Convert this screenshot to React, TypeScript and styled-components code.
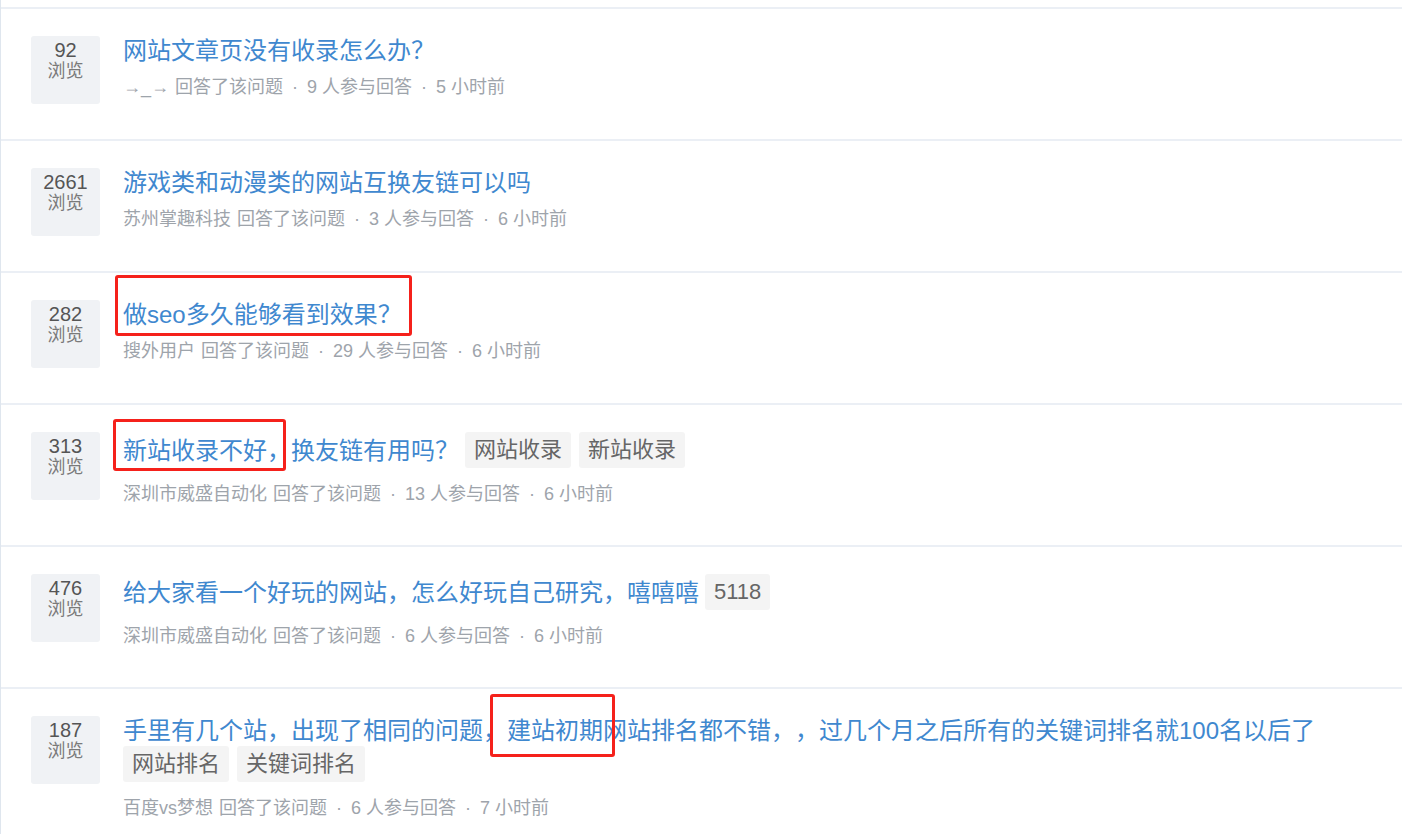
import React from "react";
import styled, { createGlobalStyle } from "styled-components";

const Global = createGlobalStyle`
  html, body { margin: 0; padding: 0; background: #ffffff; }
  body {
    font-family: "Liberation Sans", "Noto Sans CJK SC", sans-serif;
    text-spacing-trim: space-all;
  }
`;

const Page = styled.div`
  width: 1402px;
  min-height: 834px;
  box-sizing: border-box;
  border-left: 1px solid #dfe6ee;
  padding-top: 7px;
  overflow: hidden;
`;

const Row = styled.div`
  position: relative;
  display: flex;
  align-items: flex-start;
  border-top: 2px solid #ebeff5;
  padding: 27px 0 35px 30px;
`;

const ViewBox = styled.div`
  flex: none;
  width: 69px;
  height: 68px;
  box-sizing: border-box;
  padding-top: 3px;
  background: #f0f2f5;
  border-radius: 3px;
  display: flex;
  flex-direction: column;
  align-items: center;
`;

const ViewNum = styled.div`
  font-size: 20px;
  line-height: 22px;
  color: #555555;
`;

const ViewLabel = styled.div`
  font-size: 18px;
  line-height: 21px;
  color: #7a7a7a;
`;

const Body = styled.div`
  flex: 1;
  min-width: 0;
  margin-left: 23px;
  padding-bottom: 4px;
`;

const Title = styled.div`
  font-size: 24px;
  line-height: 30px;
  color: #3f88cf;
`;

const Tag = styled.span<{ $first?: boolean }>`
  display: inline-block;
  vertical-align: middle;
  height: 36px;
  line-height: 36px;
  padding: 0 9px;
  margin: 0 0 5px ${(p) => (p.$first ? "6px" : "8px")};
  background: #f4f4f4;
  border-radius: 3px;
  font-size: 22px;
  color: #666666;
`;

const WrapTags = styled.span`
  & > span:first-child { margin-left: 0; }
`;

const Meta = styled.div`
  margin-top: 9px;
  font-size: 18px;
  line-height: 24px;
  color: #9ea4ab;
  white-space: nowrap;
`;

const Author = styled.span`
  margin-right: 6px;
`;

const Sep = styled.span`
  display: inline-block;
  width: 24px;
  text-align: center;
`;

const Mark = styled.div<{ $l: number; $t: number; $w: number; $h: number }>`
  position: absolute;
  left: ${(p) => p.$l}px;
  top: ${(p) => p.$t}px;
  width: ${(p) => p.$w}px;
  height: ${(p) => p.$h}px;
  box-sizing: border-box;
  border: 3px solid #f5211b;
  border-radius: 3px;
  pointer-events: none;
`;

type Item = {
  views: string;
  title: string;
  tags?: string[];
  wrapTags?: boolean;
  author: string;
  people: number;
  time: string;
  mark?: { l: number; t: number; w: number; h: number };
};

const items: Item[] = [
  { views: "92", title: "网站文章页没有收录怎么办？", author: "→_→", people: 9, time: "5 小时前" },
  { views: "2661", title: "游戏类和动漫类的网站互换友链可以吗", author: "苏州掌趣科技", people: 3, time: "6 小时前" },
  {
    views: "282",
    title: "做seo多久能够看到效果？",
    author: "搜外用户",
    people: 29,
    time: "6 小时前",
    mark: { l: 114, t: 2, w: 297, h: 61 },
  },
  {
    views: "313",
    title: "新站收录不好，换友链有用吗？",
    tags: ["网站收录", "新站收录"],
    author: "深圳市威盛自动化",
    people: 13,
    time: "6 小时前",
    mark: { l: 112, t: 14, w: 173, h: 52 },
  },
  {
    views: "476",
    title: "给大家看一个好玩的网站，怎么好玩自己研究，嘻嘻嘻",
    tags: ["5118"],
    author: "深圳市威盛自动化",
    people: 6,
    time: "6 小时前",
  },
  {
    views: "187",
    title: "手里有几个站，出现了相同的问题，建站初期网站排名都不错，，过几个月之后所有的关键词排名就100名以后了",
    tags: ["网站排名", "关键词排名"],
    wrapTags: true,
    author: "百度vs梦想",
    people: 6,
    time: "7 小时前",
    mark: { l: 489, t: 5, w: 125, h: 63 },
  },
];

export default function App() {
  return (
    <>
      <Global />
      <Page>
        {items.map((it, i) => (
          <Row key={i}>
            <ViewBox>
              <ViewNum>{it.views}</ViewNum>
              <ViewLabel>浏览</ViewLabel>
            </ViewBox>
            <Body>
              <Title>
                {it.title}
                {it.tags &&
                  (it.wrapTags ? (
                    <WrapTags>
                      {it.tags.map((t, j) => (
                        <Tag key={t} $first={j === 0}>
                          {t}
                        </Tag>
                      ))}
                    </WrapTags>
                  ) : (
                    it.tags.map((t, j) => (
                      <Tag key={t} $first={j === 0}>
                        {t}
                      </Tag>
                    ))
                  ))}
              </Title>
              <Meta>
                <Author>{it.author}</Author>回答了该问题
                <Sep>·</Sep>
                {it.people} 人参与回答
                <Sep>·</Sep>
                {it.time}
              </Meta>
            </Body>
            {it.mark && <Mark $l={it.mark.l} $t={it.mark.t} $w={it.mark.w} $h={it.mark.h} />}
          </Row>
        ))}
      </Page>
    </>
  );
}
